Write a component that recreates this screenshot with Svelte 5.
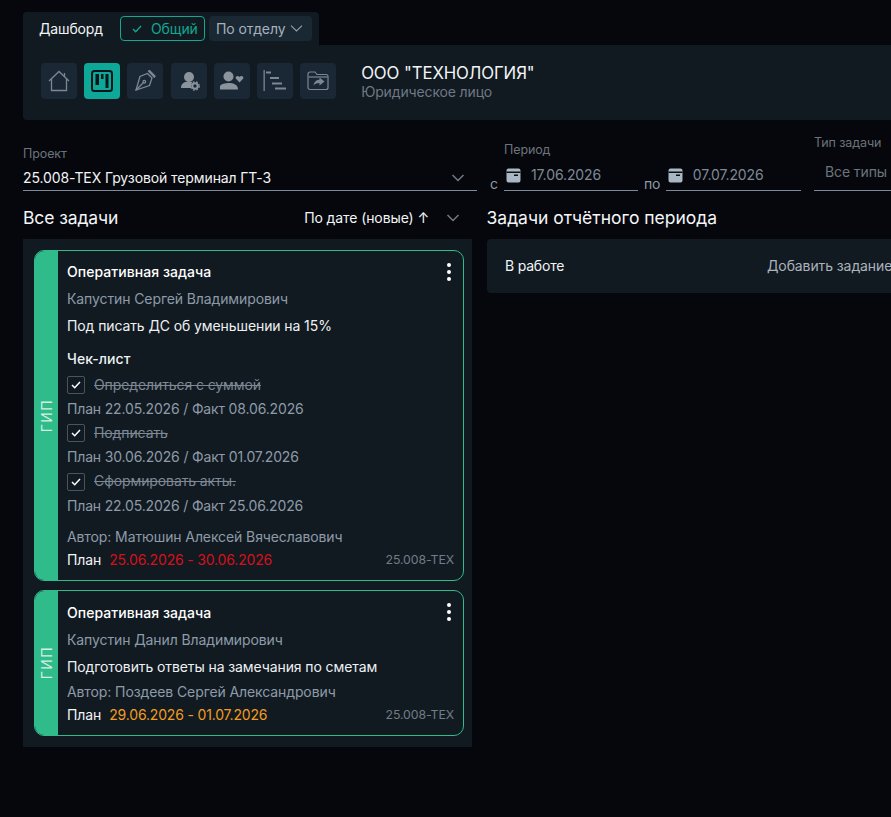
<script>
  const cards = [
    {
      assignee: 'Капустин Сергей Владимирович',
      title: 'Под писать ДС об уменьшении на 15%',
      checks: [
        { t: 'Определиться с суммой', p: 'План 22.05.2026 / Факт 08.06.2026' },
        { t: 'Подписать', p: 'План 30.06.2026 / Факт 01.07.2026' },
        { t: 'Сформировать акты.', p: 'План 22.05.2026 / Факт 25.06.2026' }
      ],
      author: 'Автор: Матюшин Алексей Вячеславович',
      dates: '25.06.2026 - 30.06.2026',
      tone: 'red'
    },
    {
      assignee: 'Капустин Данил Владимирович',
      title: 'Подготовить ответы на замечания по сметам',
      checks: [],
      author: 'Автор: Поздеев Сергей Александрович',
      dates: '29.06.2026 - 01.07.2026',
      tone: 'orange'
    }
  ];
</script>

{#snippet chevron()}
  <svg class="chev" width="14" height="8" viewBox="0 0 14 8" fill="none"><path d="M1.500 1l5.500 5.500L12.500 1" stroke="currentColor" stroke-width="1.500"/></svg>
{/snippet}

{#snippet calendar()}
  <svg width="15" height="15" viewBox="0 0 15 15"><path fill="#a9b6c4" d="M2.500 0.500h10a2 2 0 0 1 2 2v10a2 2 0 0 1-2 2h-10a2 2 0 0 1-2-2v-10a2 2 0 0 1 2-2z"/><rect x="0.500" y="3.500" width="14" height="1.500" fill="#0b0e13"/><rect x="8" y="6.500" width="4" height="1.500" fill="#0b0e13"/></svg>
{/snippet}

<div class="page">
  <div class="tabs">
    <span class="tab-title">Дашборд</span>
    <span class="pill active">
      <svg width="10" height="8" viewBox="0 0 10 8" fill="none"><path d="M1 4l2.700 2.700L9 1" stroke="#12a892" stroke-width="1.300"/></svg>
      Общий
    </span>
    <span class="pill plain">По отделу
      <svg width="13" height="7" viewBox="0 0 13 7" fill="none"><path d="M1 .7l5.500 5.300L12 .7" stroke="#93a0ad" stroke-width="1.100"/></svg>
    </span>
  </div>

  <section class="hero">
    <div class="icons">
      <span class="ico">
        <svg width="22" height="22" viewBox="0 0 22 22" fill="none" stroke="#7d8791" stroke-width="1.300"><path d="M1 11L11 1.500 21 11"/><path d="M3.500 9v11.500h15V9"/><path d="M16.500 3v3.500"/></svg>
      </span>
      <span class="ico on">
        <svg width="22" height="22" viewBox="0 0 22 22"><rect x="1" y="1" width="20" height="20" rx="2.500" fill="none" stroke="#06161a" stroke-width="2"/><rect x="4.500" y="4" width="3.500" height="11" fill="#06161a"/><rect x="10" y="4" width="2.500" height="5" fill="#06161a"/><rect x="14.500" y="4" width="3" height="14" fill="#06161a"/></svg>
      </span>
      <span class="ico">
        <svg width="22" height="22" viewBox="0 0 22 22" fill="none" stroke="#7d8791" stroke-width="1.300"><path d="M13.500 3.500L18 8l-2.500 7.500L2 20 6 6.500z"/><path d="M2 20l7.300-7.300"/><circle cx="10.300" cy="11.700" r="1.300"/><path d="M14 1.500l1.500-1 5.500 5.500-1 1.700" fill="#7d8791"/></svg>
      </span>
      <span class="ico">
        <svg width="22" height="22" viewBox="0 0 22 22"><circle cx="11" cy="7" r="5" fill="#8b949d"/><path d="M3 18c0-4.500 3.500-6.500 8-6.500 1.500 0 2.500.2 3.500.5-1.500 1.500-2 4-1 6z" fill="#8b949d"/><circle cx="17" cy="16" r="2.700" fill="none" stroke="#8b949d" stroke-width="2"/><circle cx="17" cy="16" r="4.200" fill="none" stroke="#8b949d" stroke-width="1.300" stroke-dasharray="1.700 1.700"/></svg>
      </span>
      <span class="ico">
        <svg width="24" height="20" viewBox="0 0 24 20"><circle cx="8.500" cy="5.500" r="5" fill="#8b949d"/><path d="M-1 18.500c0-5 4.500-6.500 9.500-6.500s9.500 1.500 9.500 6.500z" fill="#8b949d"/><path d="M19.500 11.500l-3.500-3.700c-1.500-2.200 2-4 3.500-1.700 1.500-2.300 5-.5 3.500 1.700z" fill="#8b949d"/></svg>
      </span>
      <span class="ico">
        <svg width="24" height="24" viewBox="0 0 24 24" fill="#7d8791"><rect x="0.500" y="1" width="1.300" height="21"/><rect x="3" y="2.500" width="5" height="2"/><rect x="7" y="8" width="9" height="2"/><rect x="9" y="13.500" width="10" height="2"/><rect x="12" y="18.500" width="11" height="2"/></svg>
      </span>
      <span class="ico">
        <svg width="22" height="20" viewBox="0 0 22 20" fill="none" stroke="#7d8791" stroke-width="1.200"><path d="M1 16.500V3a2 2 0 0 1 2-2h5l2 2.500h9a2 2 0 0 1 2 2v11a2 2 0 0 1-2 2H3a2 2 0 0 1-2-2z"/><path d="M1.500 6h19"/><path fill="#7d8791" stroke="none" d="M12.500 6.500l5 4-5 4v-2.500c-2.500 0-4.500.7-6 2.500.5-3.500 2.800-6 6-5.800z"/></svg>
      </span>
    </div>
    <div class="org">
      <div class="org-name">ООО "ТЕХНОЛОГИЯ"</div>
      <div class="org-type">Юридическое лицо</div>
    </div>
  </section>

  <div class="filters">
    <div class="f-project">
      <div class="label">Проект</div>
      <div class="select">
        <span>25.008-ТЕХ Грузовой терминал ГТ-3</span>
        {@render chevron()}
      </div>
    </div>
    <div class="f-period">
      <div class="label">Период</div>
      <div class="dates">
        <span class="pre">с</span>
        <div class="date first">{@render calendar()}<span>17.06.2026</span></div>
        <span class="pre">по</span>
        <div class="date second">{@render calendar()}<span>07.07.2026</span></div>
      </div>
    </div>
    <div class="f-type">
      <div class="label">Тип задачи</div>
      <div class="type-val">Все типы задач</div>
    </div>
  </div>

  <div class="cols">
    <div class="col-left">
      <div class="col-head">
        <h2>Все задачи</h2>
        <div class="sort"><span>По дате (новые) ↑</span>{@render chevron()}</div>
      </div>
      <div class="list">
        {#each cards as c}
          <article class="card">
            <div class="stripe"><span>ГИП</span></div>
            <div class="body" class:short={!c.checks.length}>
              <div class="kind">Оперативная задача</div>
              <div class="muted who">{c.assignee}</div>
              <div class="title">{c.title}</div>
              {#if c.checks.length}
                <div class="ck-head">Чек-лист</div>
                {#each c.checks as k}
                  <div class="ck">
                    <span class="box"><svg width="10" height="8" viewBox="0 0 10 8" fill="none"><path d="M1 4l2.700 2.700L9 1" stroke="#fff" stroke-width="1.500"/></svg></span>
                    <s>{k.t}</s>
                  </div>
                  <div class="muted plan-line">{k.p}</div>
                {/each}
              {/if}
              <div class="muted author" class:spaced={c.checks.length}>{c.author}</div>
              <div class="foot">
                <span class="pl">План</span>
                <span class="range {c.tone}">{c.dates}</span>
                <span class="code">25.008-ТЕХ</span>
              </div>
              <div class="dots"><i></i><i></i><i></i></div>
            </div>
          </article>
        {/each}
      </div>
    </div>
    <div class="col-right">
      <div class="col-head"><h2>Задачи отчётного периода</h2></div>
      <div class="work">
        <span class="w1">В работе</span>
        <span class="w2">Добавить задание</span>
      </div>
    </div>
  </div>
</div>

<style>
  :global(body) {
    margin: 0;
    background: #05070c;
    overflow: hidden;
  }
  .page {
    width: 891px;
    height: 817px;
    overflow: hidden;
    box-sizing: border-box;
    padding: 12px 0 0 23px;
    font-family: Inter, "Noto Sans", sans-serif;
    font-size: 14px;
    letter-spacing: -0.1px;
    color: #fff;
  }
  .tabs {
    width: 296px;
    height: 33px;
    box-sizing: border-box;
    background: #111a21;
    border-radius: 4px 4px 0 0;
    display: flex;
    align-items: center;
    padding: 0 0 0 16px;
    white-space: nowrap;
  }
  .tab-title { width: 81px; color: #f1f4f6; letter-spacing: -0.15px; }
  .pill {
    height: 25px;
    box-sizing: border-box;
    border-radius: 4px;
    display: flex;
    align-items: center;
    gap: 9px;
  }
  .active {
    width: 85px;
    border: 1px solid #12a892;
    color: #12a892;
    padding-left: 11px;
  }
  .plain {
    margin-left: 4px;
    width: 103px;
    background: #1a2833;
    color: #a7b1bb;
    padding-left: 7px;
    gap: 5px;
  }
  .hero {
    height: 75px;
    box-sizing: border-box;
    background: #111a21;
    display: flex;
    padding: 18px 0 0 18px;
    border-radius: 0 0 0 4px;
  }
  .icons { display: flex; gap: 7.2px; }
  .ico {
    width: 36px;
    height: 36px;
    border-radius: 4px;
    background: #1a2835;
    display: flex;
    align-items: center;
    justify-content: center;
  }
  .ico.on { background: #0ea898; }
  .org { margin-left: 25px; }
  .org-name { font-size: 16.800px; line-height: 20px; color: #f2f4f6; }
  .org-type { font-size: 14px; line-height: 18px; color: #6e7882; letter-spacing: -0.14px; }
  .filters {
    height: 71px;
    display: flex;
    align-items: flex-end;
  }
  .label { font-size: 12.500px; color: #6c737b; line-height: 16px; }
  .f-project { width: 454px; flex: none; }
  .f-project .label { margin-bottom: 5px; }
  .select {
    height: 21px;
    padding: 2px 12px 0 0;
    border-bottom: 1px solid #7e8a99;
    display: flex;
    justify-content: space-between;
    color: #f2f4f6;
    line-height: 17px;
    font-size: 14px;
  }
  .chev { color: #727c86; margin-top: 5px; flex: none; }
  .f-period { margin-left: 13px; width: 311px; flex: none; }
  .f-period > .label { margin: 0 0 7px 14px; }
  .dates { display: flex; align-items: flex-end; }
  .pre { color: #8e99a5; line-height: 17px; margin-bottom: -1px; }
  .date {
    width: 134.500px;
    height: 26px;
    box-sizing: border-box;
    border-bottom: 1px solid #7e8a99;
    margin: 0 5px 0 6px;
    display: flex;
    gap: 10px;
    padding: 1px 0 0 2px;
    color: #7f8995;
    line-height: 18px;
    flex: none;
  }
  .date.first { margin-right: 5.500px; }
  .date.second { margin-left: 5.500px; width: 135px; }
  .date svg { margin-top: 2px; }
  .f-type { margin-left: 13px; width: 200px; flex: none; }
  .f-type .label { margin-bottom: 11px; }
  .type-val {
    height: 29px;
    box-sizing: border-box;
    border-bottom: 1px solid #7e8a99;
    color: #6c737b;
    padding: 1px 0 0 11px;
    white-space: nowrap;
  }
  .cols { display: flex; gap: 15px; margin-top: 14px; }
  .col-left { width: 449px; flex: none; }
  .col-right { width: 500px; flex: none; }
  .col-head {
    height: 24px;
    margin-bottom: 10px;
    display: flex;
    justify-content: space-between;
    align-items: center;
  }
  h2 { font-size: 17.500px; font-weight: 400; margin: 0; color: #f4f6f8; letter-spacing: -0.1px; }
  .col-right h2 { letter-spacing: 0; margin-left: -0.5px; }
  .sort { display: flex; gap: 17px; margin-right: 12px; font-size: 14px; color: #f2f4f6; }
  .list {
    background: #111a21;
    padding: 11px 8px 11px 11px;
    display: flex;
    flex-direction: column;
    gap: 9px;
  }
  .card {
    display: flex;
    border: 1px solid #2fbb8a;
    border-radius: 10px;
    overflow: hidden;
  }
  .stripe {
    width: 23px;
    flex: none;
    background: #2fbb8a;
    display: flex;
    align-items: center;
    justify-content: center;
  }
  .stripe span {
    transform: rotate(-90deg);
    font-size: 14px;
    letter-spacing: 1.500px;
    color: #d3efe4;
    display: block;
  }
  .body { flex: 1; position: relative; padding: 11px 9px 10px 9px; }
  .body.short { padding-top: 12px; }
  .kind { font-weight: 500; font-size: 14px; line-height: 20px; color: #fff; letter-spacing: 0.05px; }
  .muted { color: #8e9aa8; }
  .who { line-height: 20px; margin-top: 7px; }
  .title { line-height: 20px; margin-top: 7px; color: #eef1f3; }
  .ck-head { font-weight: 500; line-height: 20px; margin-top: 13px; margin-bottom: 7px; color: #eef1f3; font-size: 14px; letter-spacing: 0.05px; }
  .ck { display: flex; align-items: center; gap: 9px; height: 18px; }
  .ck s { position: relative; top: -1px; }
  .box {
    width: 16px;
    height: 16px;
    border: 1px solid #4a545e;
    border-radius: 2px;
    display: flex;
    align-items: center;
    justify-content: center;
    flex: none;
  }
  s { color: #7d8894; }
  .plan-line { line-height: 20px; margin: 5px 0 5.25px; letter-spacing: -0.16px; }
  .author { line-height: 20px; margin-top: 5px; }
  .author.spaced { margin-top: 11px; }
  .foot { display: flex; line-height: 20px; margin-top: 3px; align-items: center; }
  .pl { color: #f2f4f6; margin-right: 8px; }
  .range { letter-spacing: -0.17px; }
  .red { color: #d6101a; }
  .orange { color: #f39c1f; }
  .code { margin-left: auto; color: #727c86; font-size: 12.300px; }
  .dots {
    position: absolute;
    right: 12px;
    top: 12px;
    display: flex;
    flex-direction: column;
    gap: 3px;
  }
  .dots i { width: 4px; height: 4px; border-radius: 50%; background: #fff; display: block; }
  .work {
    height: 54px;
    box-sizing: border-box;
    background: #111a21;
    border-radius: 4px;
    display: flex;
    align-items: center;
    padding: 0 0 2px 18px;
  }
  .w1 { color: #f2f4f6; width: 262px; letter-spacing: -0.2px; }
  .w2 { color: #aab3bc; white-space: nowrap; }
</style>
